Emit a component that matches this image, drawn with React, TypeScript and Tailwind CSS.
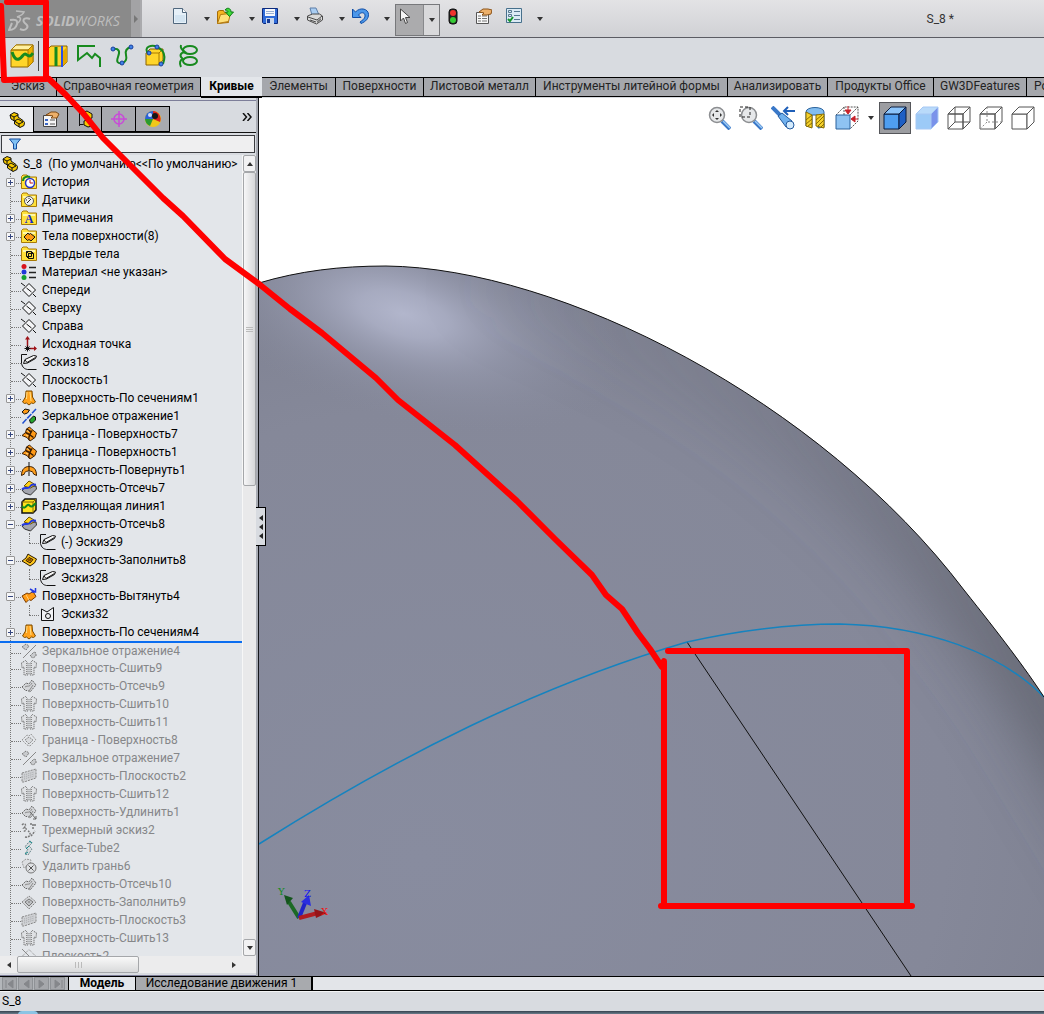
import type { ReactNode } from "react";

type IconProps = { name: string };

const Box = ({ size = 16, children }: { size?: number; children: ReactNode }) => (
  <svg width={size} height={size} viewBox={`0 0 ${size} ${size}`} className="shrink-0" aria-hidden="true">
    {children}
  </svg>
);

const Folder = ({ children }: { children: ReactNode }) => (
  <Box>
    <path d="M.5 14.500V2.500L2 1h4l1.500 2h8v11.500z" fill="#ffe13a" stroke="#a87a08" />
    <path d="M2 4h12v2H2z" fill="#fff6a8" />
    {children}
  </Box>
);

function TreeIcon({ name }: IconProps) {
  switch (name) {
    case "part":
      return (
        <Box>
          <path d="M1 3l4-2.500 4 1.500v3l5 3.500 1.500 2-.5 3-4 2-5.500-3.500v-3l-3.500-2z" fill="#f5c800" stroke="#111" />
          <path d="M1 3l4 2 4-2M5 5v4M5.500 9l3.500-2 5 3M10 12v3M10 12l4-2M5.500 9l4.500 3" stroke="#111" fill="none" />
        </Box>
      );
    case "history":
      return (
        <Folder>
          <circle cx="9" cy="9" r="4.500" fill="#fff" stroke="#2635c9" strokeWidth="1.500" />
          <path d="M9 6v3h3" stroke="#c01818" fill="none" />
          <path d="M2 7c0-4 4-5 7-4" stroke="#168a20" strokeWidth="2" fill="none" />
        </Folder>
      );
    case "sensor":
      return (
        <Folder>
          <circle cx="8" cy="9" r="4.500" fill="#f2f2f2" stroke="#555" />
          <path d="M6 11l4-4M5 8h1M8 6v1" stroke="#222" fill="none" />
        </Folder>
      );
    case "notes":
      return (
        <Folder>
          <text x="8" y="13" textAnchor="middle" fontSize="12" fontWeight="bold" fontFamily="Liberation Serif, serif" fill="#1326c8">A</text>
        </Folder>
      );
    case "surfaces":
      return (
        <Folder>
          <path d="M3 9l4-4 1 1.500L9.500 5.500 14 9l-4 4-2-1.500L6.500 12.500z" fill="#ff9a14" stroke="#111" />
        </Folder>
      );
    case "solids":
      return (
        <Folder>
          <path d="M5.500 5.500h5v5h-5zM7.500 7.500h5v5h-5zM5.500 5.500l2 2M10.500 5.500l2 2M5.500 10.500l2 2" fill="none" stroke="#111" />
        </Folder>
      );
    case "material":
      return (
        <Box>
          <circle cx="3" cy="2.500" r="2.500" fill="#d8141c" />
          <circle cx="3" cy="8" r="2.500" fill="#1f36d8" />
          <circle cx="3" cy="13.500" r="2.500" fill="#14a030" />
          <path d="M8 3.500h7M8 8.500h7M8 13.500h7" stroke="#222" strokeWidth="1.500" />
        </Box>
      );
    case "plane":
      return (
        <Box>
          <path d="M1.500 8L8 1.500 14.500 8 8 14.500z" fill="#f3f4f6" stroke="#111" />
          <path d="M0 1l4 3M12 12l3 3M5.500 6l5 4" stroke="#111" fill="none" />
        </Box>
      );
    case "planeOff":
      return (
        <Box>
          <path d="M1.500 8L8 1.500 14.500 8 8 14.500z" fill="none" stroke="#888" strokeDasharray="1 1" />
          <path d="M1 1l14 14" stroke="#888" />
        </Box>
      );
    case "origin":
      return (
        <Box>
          <path d="M6.500 12V2M8 12.500h7" stroke="#a01218" strokeWidth="1.500" fill="none" />
          <path d="M6.500 0l-2.500 3.500h5zM16 12.500l-3-2.500v5z" fill="#a01218" />
          <path d="M3.500 12.500h6M6.500 9.500v6M4.500 10.500l4 4M8.500 10.500l-4 4" stroke="#111" />
        </Box>
      );
    case "sketch":
      return (
        <Box>
          <path d="M6 .5H.5v9c1 4 3 5.500 6 6h9" fill="none" stroke="#111" />
          <path d="M2.500 9.500l1.500-4 8.500-4 3 .5-1 2.500-8 4.500z" fill="#f6f6f6" stroke="#111" />
          <path d="M4 6l2 2.500 8.500-5" fill="none" stroke="#111" />
        </Box>
      );
    case "sketchClosed":
      return (
        <Box>
          <path d="M1.500 3v11.500h12V1.500L7 6z" fill="#f2f3f5" stroke="#111" />
          <circle cx="8" cy="10" r="2.500" fill="none" stroke="#111" />
        </Box>
      );
    case "loft":
      return (
        <Box>
          <path d="M5 1h6l.5 6L14.500 12l-2 1.500-2-.5-2.500 2-2.500-2-2 .5-2-1.500 3-5z" fill="#ffa21c" stroke="#7a4a00" />
          <path d="M6 2l-.5 7M9 2l1 9" stroke="#ffe08a" />
        </Box>
      );
    case "mirror":
      return (
        <Box>
          <path d="M1 4l3-3 4.500 1-2 3-3 1z" fill="#ff9a14" stroke="#111" />
          <path d="M8.500 12l4-4 2 1v3l-3 3h-2z" fill="#27a52c" stroke="#111" />
          <path d="M1.500 15.500L15 1" stroke="#1f4fd0" strokeWidth="1.500" strokeDasharray="6 1" />
        </Box>
      );
    case "boundary":
      return (
        <Box>
          <path d="M1 9.500l3.500-3 1-3.500 3-2 2.500 2.500 4.500 3.500-1.500 4.500-5 3.500-3-3.500z" fill="#ff9a18" stroke="#3a1c00" />
          <path d="M4.500 6.500l3 1.500 5 3.500M8 14c-1-3 1-6 3-9.500M5.500 3l5 3" stroke="#3a1c00" strokeWidth="1.500" fill="none" />
          <path d="M6 4.500l2 1M5 9l2 1" stroke="#ffd98a" />
        </Box>
      );
    case "revolve":
      return (
        <Box>
          <path d="M.5 13.500C.5 7 4 4.500 8 4.500s7.500 2 7.500 9l-3-1.500c0-2-2-3-4.500-3s-5 1-4.500 3z" fill="#ff9f1c" stroke="#3a1c00" />
          <path d="M8 0v15" stroke="#111" strokeDasharray="4 1" />
        </Box>
      );
    case "trim":
      return (
        <Box>
          <path d="M1 10l5-3 9-1 .5 3-6 6-6-2z" fill="#a3a5ae" stroke="#333" />
          <path d="M3 6l5-5 3.500 2 3 2-5 3z" fill="#ffd21a" stroke="#6b5200" />
          <path d="M1 9.500c3-4 5 1 8-3s3-1 6-2" stroke="#2338e0" strokeWidth="2" fill="none" />
        </Box>
      );
    case "split":
      return (
        <Box>
          <path d="M1 4l3-3h11v11l-3 3H1z" fill="#ffe11c" stroke="#111" strokeWidth="1.500" />
          <path d="M1 4h11l3-3M12 4v11" stroke="#8a6a00" fill="none" />
          <path d="M1 8c3 5 5-3 7-1s2 3 7-2" stroke="#128a1c" strokeWidth="2" fill="none" />
        </Box>
      );
    case "fill":
      return (
        <Box>
          <path d="M1 9l4-3 2-4 3 2 5.500 3-2 4-4.500 3-3-2z" fill="#ffc61a" stroke="#2a1a00" />
          <path d="M5 8.500l3-3 4 2-3 3.500z" fill="#e28a00" stroke="#2a1a00" />
          <path d="M7 8h3" stroke="#2a1a00" />
        </Box>
      );
    case "extrude":
      return (
        <Box>
          <path d="M1 8l5-3 2 1 4-2.500 3 5-5 4-2-1-3 3z" fill="#ff9a14" stroke="#7a3c00" />
          <path d="M5 7l3 5" stroke="#ffd27a" />
          <path d="M9 1l5 3M14.500 0v4h-4" stroke="#2338e0" strokeWidth="1.500" fill="none" />
        </Box>
      );
    case "knit":
      return (
        <Box>
          <path d="M.5 3l4-2.500L7 3v12H3V7L1 8zM15.500 3l-4-2.500L9 3v12h4V7l2 1z" fill="#dfe1e4" stroke="#555" strokeDasharray="1 1" />
          <path d="M5.500 3v11M10.500 3v11" stroke="#888" strokeDasharray="1 1" />
        </Box>
      );
    case "trimOff":
    case "extendOff":
      return (
        <Box>
          <path d="M1 9l4-4 3 1 3-4 4 5-6 7-3-2-1 1z" fill="#d3d5d8" stroke="#666" strokeDasharray="2 1" />
          <path d="M4 9c3-2 4 1 7-4M8 13l4-6" stroke="#888" fill="none" />
          {name === "extendOff" && <path d="M9 8l6 7M12 15h3v-3" stroke="#666" fill="none" />}
        </Box>
      );
    case "boundaryOff":
      return (
        <Box>
          <path d="M1 8l5-5 2 1 2-2 5 6-6 6-3-1z" fill="none" stroke="#999" strokeDasharray="2 1" />
          <path d="M4 8l4-3 4 3-4 4z" fill="#d8dadd" stroke="#888" strokeDasharray="2 1" />
        </Box>
      );
    case "mirrorOff":
      return (
        <Box>
          <path d="M1 4l4-3 3 2-3 4z" fill="#c9cbce" stroke="#777" strokeDasharray="2 1" />
          <path d="M9 13l4-4 2 1v3l-3 2z" fill="#c9cbce" stroke="#777" strokeDasharray="2 1" />
          <path d="M2 15L15 2" stroke="#888" />
        </Box>
      );
    case "planar":
      return (
        <Box>
          <path d="M1 5l14-4v9L3 14H1z" fill="#cfd1d4" stroke="#888" strokeDasharray="2 1" />
          <path d="M3 7l10-3M3 9l10-3M3 11l10-3" stroke="#a7a9ac" strokeDasharray="1 1" />
        </Box>
      );
    case "sketch3d":
      return (
        <Box>
          <path d="M1 3c3-3 5 0 2 3 4 0 2 4-1 3M9 2h3v5M4 15c5 1 7-4 3-6M10 14l4-5M14 2v3" fill="none" stroke="#777" strokeWidth="1.500" strokeDasharray="2 1" />
        </Box>
      );
    case "tube":
      return (
        <Box>
          <path d="M6 4l4-3 1 2-3 3 3 3-4 6-3-1 3-5-3-2z" fill="#d9dbde" stroke="#6e8b8e" strokeDasharray="2 1" />
          <path d="M5 9l3-3M4 14l3-2M8 1l3 2" stroke="#138b8e" />
        </Box>
      );
    case "deleteFace":
      return (
        <Box>
          <path d="M1 4l4-3 5 1-1 4-6 4z" fill="#dcdee1" stroke="#999" strokeDasharray="2 1" />
          <circle cx="10" cy="10" r="5" fill="#dfe1e4" stroke="#777" />
          <path d="M7.500 7.500l5 5M12.500 7.500l-5 5" stroke="#555" />
        </Box>
      );
    default:
      return (
        <Box>
          <path d="M1 8l7-6 7 6-7 7z" fill="#d4d6d9" stroke="#888" strokeDasharray="2 1" />
          <path d="M4 8l4-3 4 3-4 4zM7 8h2" fill="#c0c2c5" stroke="#777" />
        </Box>
      );
  }
}

type Node = { label: string; icon: string; state?: "plus" | "minus"; child?: boolean; off?: boolean; rollback?: boolean };

const nodes: Node[] = [
  { label: "История", icon: "history", state: "plus" },
  { label: "Датчики", icon: "sensor" },
  { label: "Примечания", icon: "notes", state: "plus" },
  { label: "Тела поверхности(8)", icon: "surfaces", state: "plus" },
  { label: "Твердые тела", icon: "solids" },
  { label: "Материал <не указан>", icon: "material" },
  { label: "Спереди", icon: "plane" },
  { label: "Сверху", icon: "plane" },
  { label: "Справа", icon: "plane" },
  { label: "Исходная точка", icon: "origin" },
  { label: "Эскиз18", icon: "sketch" },
  { label: "Плоскость1", icon: "plane" },
  { label: "Поверхность-По сечениям1", icon: "loft", state: "plus" },
  { label: "Зеркальное отражение1", icon: "mirror" },
  { label: "Граница - Поверхность7", icon: "boundary", state: "plus" },
  { label: "Граница - Поверхность1", icon: "boundary", state: "plus" },
  { label: "Поверхность-Повернуть1", icon: "revolve", state: "plus" },
  { label: "Поверхность-Отсечь7", icon: "trim", state: "plus" },
  { label: "Разделяющая линия1", icon: "split", state: "plus" },
  { label: "Поверхность-Отсечь8", icon: "trim", state: "minus" },
  { label: "(-) Эскиз29", icon: "sketch", child: true },
  { label: "Поверхность-Заполнить8", icon: "fill", state: "minus" },
  { label: "Эскиз28", icon: "sketch", child: true },
  { label: "Поверхность-Вытянуть4", icon: "extrude", state: "minus" },
  { label: "Эскиз32", icon: "sketchClosed", child: true },
  { label: "Поверхность-По сечениям4", icon: "loft", state: "plus" },
  { label: "Зеркальное отражение4", icon: "mirrorOff", off: true, rollback: true },
  { label: "Поверхность-Сшить9", icon: "knit", off: true },
  { label: "Поверхность-Отсечь9", icon: "trimOff", off: true },
  { label: "Поверхность-Сшить10", icon: "knit", off: true },
  { label: "Поверхность-Сшить11", icon: "knit", off: true },
  { label: "Граница - Поверхность8", icon: "boundaryOff", off: true },
  { label: "Зеркальное отражение7", icon: "mirrorOff", off: true },
  { label: "Поверхность-Плоскость2", icon: "planar", off: true },
  { label: "Поверхность-Сшить12", icon: "knit", off: true },
  { label: "Поверхность-Удлинить1", icon: "extendOff", off: true },
  { label: "Трехмерный эскиз2", icon: "sketch3d", off: true },
  { label: "Surface-Tube2", icon: "tube", off: true },
  { label: "Удалить грань6", icon: "deleteFace", off: true },
  { label: "Поверхность-Отсечь10", icon: "trimOff", off: true },
  { label: "Поверхность-Заполнить9", icon: "fillOff", off: true },
  { label: "Поверхность-Плоскость3", icon: "planar", off: true },
  { label: "Поверхность-Сшить13", icon: "knit", off: true },
  { label: "Плоскость2", icon: "planeOff", off: true },
];

function TreeRow({ node }: { node: Node }) {
  return (
    <li className={`relative flex h-[18px] shrink-0 items-center ${node.child ? "pl-[40px]" : "pl-[21px]"} ${node.rollback ? "border-t-2 border-[#0a6df0]" : ""}`}>
      <span className={`absolute top-[10px] border-t border-dotted border-[#777] ${node.child ? "left-[29px] w-[10px]" : "left-[11px] w-[10px]"}`} />
      {node.child && <span className="absolute left-[29px] top-0 h-[10px] border-l border-dotted border-[#777]" />}
      {node.state && (
        <button
          aria-label={node.state === "plus" ? `Развернуть ${node.label}` : `Свернуть ${node.label}`}
          className="absolute left-[6px] top-[5px] flex size-[9px] items-center justify-center rounded-[1px] border border-[#979797] bg-[#f6f7f9]"
        >
          <svg width="5" height="5" viewBox="0 0 5 5" aria-hidden="true">
            <path d={node.state === "plus" ? "M0 2.500h5M2.500 0v5" : "M0 2.500h5"} stroke="#36477f" />
          </svg>
        </button>
      )}
      <TreeIcon name={node.icon} />
      <span className={`ml-[5px] whitespace-nowrap ${node.off ? "text-[#868789]" : "text-black"}`}>{node.label}</span>
    </li>
  );
}

const Caret = ({ className = "" }: { className?: string }) => (
  <svg width="6" height="4" viewBox="0 0 6 4" className={`shrink-0 ${className}`} aria-hidden="true">
    <path d="M0 0h6L3 4z" fill="#333" />
  </svg>
);

const fileTools = [
  {
    label: "Создать",
    art: (
      <Box size={18}>
        <path d="M2.500 1.500h9l4 4v11h-13z" fill="#e6f0f8" stroke="#50677d" />
        <path d="M11.500 1.500v4h4" fill="#fff" stroke="#50677d" />
        <path d="M4 8h10v7H4z" fill="#c7dcec" opacity=".6" />
      </Box>
    ),
  },
  {
    label: "Открыть",
    art: (
      <Box size={18}>
        <path d="M1.500 16.500v-12l2-1h4l1 2h4v10z" fill="#f5b521" stroke="#a46a08" />
        <path d="M1.500 16.500l3-9 10-1-2 8z" fill="#ffe07a" stroke="#b47a10" />
        <path d="M9 3c2-3 6-2 6 2h2.500l-4 4.500-4-4.500h2.500c0-1-1-2-3-2z" fill="#3ddb3a" stroke="#0d7a14" />
      </Box>
    ),
  },
  {
    label: "Сохранить",
    art: (
      <Box size={18}>
        <path d="M1.500 1.500h15v15h-14l-1-1z" fill="#2f6bd8" stroke="#0d2a7c" />
        <path d="M4 2h10v7H4z" fill="#f6f8fc" />
        <path d="M5 4.500h8M5 6.500h8" stroke="#9ab0d2" />
        <path d="M5 11h8v6H5z" fill="#c9d6ea" />
        <path d="M6 12h3v4H6z" fill="#163a94" />
      </Box>
    ),
  },
  {
    label: "Печать",
    art: (
      <Box size={18}>
        <path d="M4 1h6l3 7H6z" fill="#a9cdf2" stroke="#5e7fa8" />
        <path d="M1.500 9l5-2h7l3 2v4l-6 4-9-4z" fill="#d9d9d9" stroke="#4b4b4b" />
        <path d="M2 10l9 3 5-4M4 13l6 2" stroke="#4b4b4b" fill="none" />
        <path d="M11 14l4-3v2l-4 3z" fill="#777" />
      </Box>
    ),
  },
  {
    label: "Отменить",
    art: (
      <Box size={18}>
        <path d="M1.500 2v8.500h8.500L7.500 8c2-3 6-3 6.500 0s-2 5-5 7l1 1.500c5-2 7.500-5 7.500-9 0-5.500-8-8-13-2.500z" fill="#4b97ea" stroke="#0f4da6" />
      </Box>
    ),
  },
];

const Cube = ({ front, top, side, line, dashed }: { front: string; top: string; side: string; line: string; dashed?: boolean }) => (
  <>
    <path d="M1 8h15v15H1z" fill={front} stroke={line} />
    <path d="M1 8l7-7h15l-7 7z" fill={top} stroke={line} />
    <path d="M16 8l7-7v15l-7 7z" fill={side} stroke={line} />
    {dashed && <path d="M8 1v15h15M8 16l-7 7" fill="none" stroke="#888" strokeDasharray="2 2" />}
  </>
);

const tabs = [
  ["Эскиз", "w-[57px]"],
  ["Справочная геометрия", "w-[144px]"],
  ["Кривые", "w-[61px]"],
  ["Элементы", "w-[74px]"],
  ["Поверхности", "w-[88px]"],
  ["Листовой металл", "w-[112px]"],
  ["Инструменты литейной формы", "w-[192px]"],
  ["Анализировать", "w-[100px]"],
  ["Продукты Office", "w-[106px]"],
  ["GW3DFeatures", "w-[93px]"],
  ["PointCloud", "w-[84px]"],
];

function TitleBar() {
  return (
    <header className="flex h-[38px] shrink-0 items-stretch border-b border-[#5b5c63] bg-linear-to-b from-[#e3e3e5] to-[#d0d1d5]">
      <div className="flex w-[131px] shrink-0 items-center gap-1 bg-[#8a8a8a] pl-2 pt-1 text-[#bdbdbd]">
        <svg width="24" height="24" viewBox="0 0 24 24" fill="none" stroke="#bdbdbd" aria-label="DS">
          <path d="M8 2l8 1c-1 3-4 4-7 5 5 0 4 3 1 6" strokeWidth="1.500" />
          <path d="M2 11c5-1 8 0 7 4s-4 6-8 6l3-7" strokeWidth="2" />
          <path d="M22 10c-4-2-8 0-6 3s5 3 3 6-5 2-7 1" strokeWidth="2" />
        </svg>
        <span className="font-['Open_Sans',sans-serif] text-[14px] italic leading-none"><b>SOLID</b>WORKS</span>
      </div>
      <button aria-label="Развернуть меню" className="flex w-[11px] shrink-0 items-center justify-center border-r-2 border-[#aaaaad] bg-[#a3a3a5]">
        <svg width="4" height="8" viewBox="0 0 4 8" aria-hidden="true"><path d="M0 0l4 4-4 4z" fill="#777" /></svg>
      </button>
      <nav aria-label="Стандартная" className="flex shrink-0 pb-[5px] pl-[29px]">
        {fileTools.map((t) => (
          <div key={t.label} className="flex w-[45px] items-center">
            <button aria-label={t.label} className="mr-[15px]">{t.art}</button>
            <button aria-label={`${t.label}: варианты`} className="pt-[6px]"><Caret /></button>
          </div>
        ))}
      </nav>
      <div className="-ml-px mt-1 flex h-[32px] shrink-0 border border-[#77787b]">
        <button aria-label="Выбрать" className="flex w-[28px] items-start justify-center border-r border-[#88898c] bg-[#ababad] pr-[9px] pt-[3px]">
          <svg width="12" height="17" viewBox="0 0 12 17" aria-hidden="true"><path d="M1.500 1v12l3-3 2 5.500 2-1-2-5H11z" fill="#f5f5f5" stroke="#444" /></svg>
        </button>
        <button aria-label="Режимы выбора" className="flex w-[15px] items-center justify-center bg-[#d9d9db]"><Caret /></button>
      </div>
      <div className="flex shrink-0 items-center pb-[5px]">
        <button aria-label="Перестроить" className="flex w-[26px] justify-center">
          <svg width="10" height="17" viewBox="0 0 10 17" aria-hidden="true">
            <rect x="1" y="1" width="8" height="15" rx="3" fill="#222" stroke="#111" />
            <circle cx="5" cy="5" r="3" fill="#f0332d" />
            <circle cx="5" cy="12" r="3" fill="#36cc36" />
          </svg>
        </button>
        <button aria-label="Свойства файла" className="ml-[3px] flex w-[28px] justify-center">
          <Box size={18}>
            <path d="M2.500 5.500h12v11h-12z" fill="#f8f8f8" stroke="#555" />
            <path d="M4 9h3M8 9h5M4 11.500h3M8 11.500h5M4 14h3M8 14h5" stroke="#777" />
            <path d="M5 5l4-3h5l4 1-1 4-4 1-5 0 2-2z" fill="#edb06a" stroke="#8d5418" />
          </Box>
        </button>
        <button aria-label="Параметры" className="flex w-[34px] justify-center">
          <Box size={18}>
            <path d="M1.500 1.500h15v14h-15z" fill="#dbeaf4" stroke="#47708c" />
            <path d="M3.500 3.500h3v2h-3zM3.500 7.500h3v2h-3zM9 4.500h6M9 8.500h6M9 12.500h6" fill="none" stroke="#56788f" />
            <path d="M3 12l2 2 3-4" fill="none" stroke="#15952a" strokeWidth="2" />
          </Box>
        </button>
        <button aria-label="Другие параметры" className="flex w-[18px] justify-center pt-[5px]"><Caret /></button>
      </div>
      <h1 className="ml-auto self-center pr-[90px] text-[12px] text-[#333]">S_8 *</h1>
    </header>
  );
}

function CurveBar() {
  const Tool = ({ label, children }: { label: string; children: ReactNode }) => (
    <button aria-label={label} className="flex w-[32px] justify-center">
      <Box size={24}>{children}</Box>
    </button>
  );
  const dot = "#3f82e8";
  return (
    <nav aria-label="Кривые" className="flex h-[39px] shrink-0 items-center bg-[#d8dbe0] pb-1 pl-[6px]">
      <Tool label="Линия разъема">
        <path d="M1 6l5-5h17v17l-5 5H1z" fill="#ffd52a" stroke="#8a6200" />
        <path d="M18 6l5-5v17l-5 5z" fill="#efb000" stroke="#a87b00" />
        <path d="M1 6h17M6 1h17L18 6H1z" fill="#fff0a0" stroke="#a87b00" />
        <path d="M2 8c2 6 4 8 7 7s4-5 6-5 4 5 8-1" fill="none" stroke="#178a1e" strokeWidth="3" />
      </Tool>
      <span className="mr-[2px] h-[30px] border-l border-[#444]" />
      <Tool label="Проекция на плоскость">
        <path d="M2 6l4-4h16v16l-4 4H2z" fill="#ffd52a" stroke="#8a6200" />
        <path d="M11 3v19" stroke="#178a1e" strokeWidth="3" />
        <path d="M18 7l4-4v15l-4 4z" fill="#e5a800" />
        <path d="M17 2v21" stroke="#2a50e8" strokeWidth="2" />
      </Tool>
      <div className="flex gap-px">
        <Tool label="Составная кривая">
          <path d="M18 2H1v14l9-7 5 5 3-4 5 4v9" fill="none" stroke="#178a1e" strokeWidth="2" />
        </Tool>
        <Tool label="Кривая через точки">
          <path d="M2 5c8-1 8 3 6 8s0 7 4 6 5-4 4-8 1-7 5-8" fill="none" stroke="#178a1e" strokeWidth="2" />
          <circle cx="3" cy="5" r="2" fill={dot} stroke="#1a3f9c" />
          <circle cx="12" cy="19" r="2" fill={dot} stroke="#1a3f9c" />
          <circle cx="21" cy="3" r="2" fill={dot} stroke="#1a3f9c" />
        </Tool>
        <Tool label="Кривая по XYZ">
          <path d="M3 9l4-4h13v11l-4 5H3z" fill="#ffd52a" stroke="#8a6200" />
          <path d="M3 9h13l4-4M16 9v12" fill="none" stroke="#a87b00" />
          <path d="M5 9C0 3 9 0 14 3c7 3 9 9 6 17" fill="none" stroke="#178a1e" strokeWidth="2" />
          <circle cx="6" cy="9" r="2" fill={dot} stroke="#1a3f9c" />
          <circle cx="14" cy="3" r="2" fill={dot} stroke="#1a3f9c" />
          <circle cx="18" cy="20" r="2" fill={dot} stroke="#1a3f9c" />
        </Tool>
        <Tool label="Геликоид">
          <ellipse cx="14" cy="6" rx="7" ry="4" fill="none" stroke="#178a1e" strokeWidth="2" />
          <ellipse cx="14" cy="17" rx="7" ry="4" fill="none" stroke="#178a1e" strokeWidth="2" />
          <path d="M5 1c-1 3 1 5 4 7-5 1-6 4-2 7-3 1-4 4-2 8" fill="none" stroke="#178a1e" strokeWidth="2" />
        </Tool>
      </div>
    </nav>
  );
}

function FeatureManager() {
  const side = "flex w-[34px] items-center justify-center border-b border-r border-t border-black";
  return (
    <aside className="relative flex w-[259px] shrink-0 flex-col border-r border-r-[#15161a] bg-[#d8dbe0]">
      <div className="flex min-h-0 flex-1 flex-col border-r-2 border-[#a9acb4]">
        <div className="h-[3px] shrink-0 border-b border-[#7d7e99]" />
        <div className="mt-[5px] flex h-[27px] shrink-0 border-b border-[#111]">
          <button aria-label="Дерево конструирования" className="flex w-[34px] items-center justify-center border-r border-t border-black bg-[#eceef1]"><TreeIcon name="part" /></button>
          <button aria-label="Диспетчер свойств" className={`${side} bg-[#a8aaaf]`}>
            <Box size={18}>
              <path d="M1.500 5.500h13v11h-13z" fill="#f6f6f6" stroke="#444" />
              <path d="M3 9h3v2H3zM3 13h3v2H3z" fill="#3b68c8" />
              <path d="M8 10h5M8 14h5" stroke="#555" />
              <path d="M4 5l5-3h5l3 2-2 4H9l2-2z" fill="#edb06a" stroke="#7d4a14" />
            </Box>
          </button>
          <button aria-label="Диспетчер конфигураций" className={`${side} bg-[#a8aaaf]`}>
            <Box size={18}>
              <path d="M3.500 2v14M3.500 3.500h4M3.500 14.500h4" stroke="#111" fill="none" />
              <path d="M8 2l3-1 5 3v4l-4 1-4-3zM8 11l3-1 5 3v3l-4 1-4-2z" fill="#f5c800" stroke="#111" />
            </Box>
          </button>
          <button aria-label="Диспетчер размеров" className={`${side} bg-[#a8aaaf]`}>
            <Box size={18}>
              <circle cx="9" cy="9" r="5" fill="none" stroke="#c84bd8" strokeWidth="1.500" />
              <path d="M9 1v16M1 9h16" stroke="#c84bd8" strokeWidth="1.500" />
            </Box>
          </button>
          <button aria-label="Диспетчер отображения" className={`${side} bg-[#a8aaaf]`}>
            <Box size={18}>
              <circle cx="9" cy="9" r="8" fill="#f0c818" />
              <path d="M9 9L1 9a8 8 0 0 1 8-8z" fill="#2a62d8" />
              <path d="M9 9V1a8 8 0 0 1 7 11z" fill="#d8221c" />
              <path d="M9 9l-8 0a8 8 0 0 0 5 7z" fill="#2a9a30" />
              <circle cx="11" cy="6" r="3" fill="#161616" />
              <circle cx="6" cy="5" r="2" fill="#fff" opacity=".8" />
            </Box>
          </button>
          <button aria-label="Показать область" className="ml-auto mr-1 flex items-start pt-[7px]">
            <svg width="10" height="8" viewBox="0 0 10 8" aria-hidden="true"><path d="M1 0l3.500 4L1 8M5.500 0L9 4 5.500 8" fill="none" stroke="#111" strokeWidth="1.500" /></svg>
          </button>
        </div>
        <label className="mx-px mt-[2px] flex h-[18px] shrink-0 items-center border border-[#3b3c40] bg-[#efeff0] pl-[7px]">
          <svg width="12" height="12" viewBox="0 0 12 12" aria-hidden="true"><path d="M.5 1h11L7.500 6v5h-3V6z" fill="#7fc0f4" stroke="#134a9c" /></svg>
          <input aria-label="Фильтр дерева" className="h-full min-w-0 flex-1 bg-transparent px-1 outline-none" />
        </label>
        <div className="mt-[2px] flex min-h-0 flex-1 bg-[#e3e6ea]">
          <div className="relative min-h-0 min-w-0 flex-1 overflow-hidden">
            <ul className="absolute inset-0 overflow-hidden">
              <li className="flex h-[18px] items-center pl-[2px]">
                <TreeIcon name="part" />
                <span className="ml-[5px] whitespace-pre">S_8  (По умолчанию&lt;&lt;По умолчанию&gt;</span>
              </li>
              <li className="relative">
                <span className="absolute bottom-0 left-[10px] top-0 border-l border-dotted border-[#777]" />
                <ul>
                  {nodes.map((n) => (
                    <TreeRow key={n.label} node={n} />
                  ))}
                </ul>
              </li>
            </ul>
          </div>
          <div className="flex w-[14px] shrink-0 flex-col border-l border-[#f7f7f7] bg-[#e9e9ea]">
            <button aria-label="Прокрутить вверх" className="flex h-[17px] items-center justify-center rounded-[2px] border border-[#a5a7aa] bg-[#f2f2f3]"><Caret className="rotate-180" /></button>
            <div className="flex min-h-0 flex-1 flex-col">
              <div className="flex h-[41%] flex-col items-center justify-center gap-px rounded-[2px] border border-[#a5a7aa] bg-linear-to-r from-[#f7f7f8] to-[#d6d7d9]">
                <span className="w-[7px] border-t border-[#bbb]" />
                <span className="w-[7px] border-t border-[#bbb]" />
                <span className="w-[7px] border-t border-[#bbb]" />
              </div>
            </div>
            <button aria-label="Прокрутить вниз" className="flex h-[17px] items-center justify-center rounded-[2px] border border-[#a5a7aa] bg-[#f2f2f3]"><Caret /></button>
          </div>
        </div>
        <div className="flex h-[17px] shrink-0 items-stretch bg-[#ececed] pr-[14px]">
          <button aria-label="Прокрутить влево" className="flex w-[17px] items-center justify-center"><Caret className="rotate-90" /></button>
          <div className="flex w-[122px] items-center justify-center gap-[2px] rounded-[2px] border border-[#a5a7aa] bg-linear-to-b from-[#f9f9f9] to-[#d9dadb]">
            <span className="h-[6px] border-l border-[#bbb]" />
            <span className="h-[6px] border-l border-[#bbb]" />
            <span className="h-[6px] border-l border-[#bbb]" />
          </div>
          <button aria-label="Прокрутить вправо" className="ml-auto flex w-[17px] items-center justify-center"><Caret className="-rotate-90" /></button>
        </div>
        <div className="h-[3px] shrink-0 border-b border-[#7d7e99]" />
      </div>
      <button aria-label="Свернуть панель" className="absolute -right-[8px] top-[409px] z-10 flex h-[39px] w-[10px] flex-col items-center justify-evenly border border-l-0 border-black bg-[#d8dbe0]">
        <svg width="4" height="30" viewBox="0 0 4 30" aria-hidden="true"><path d="M4 3v6L0 6zM4 12v6l-4-3zM4 21v6l-4-3z" fill="#222" /></svg>
      </button>
    </aside>
  );
}

function Scene() {
  const outline = "M0 185C40 173 81 168 127 168C301 170 561 302 705 492C741 537 766 570 785 599";
  return (
    <svg className="absolute inset-0 size-full bg-white" aria-label="Модель S_8">
      <defs>
        <radialGradient id="shine" gradientUnits="userSpaceOnUse" cx="0" cy="0" r="1" gradientTransform="translate(145 216) rotate(16) scale(230 105)">
          <stop offset="0" stopColor="#b2b6cc" />
          <stop offset=".2" stopColor="#abafc5" stopOpacity=".9" />
          <stop offset=".5" stopColor="#9a9eb3" stopOpacity=".55" />
          <stop offset="1" stopColor="#868a9d" stopOpacity="0" />
        </radialGradient>
        <radialGradient id="body" gradientUnits="userSpaceOnUse" cx="0" cy="0" r="1" gradientTransform="translate(160 760) rotate(-12) scale(760 640)">
          <stop offset="0" stopColor="#888c9f" />
          <stop offset=".7" stopColor="#858899" />
          <stop offset="1" stopColor="#7d8090" />
        </radialGradient>
        <linearGradient id="rim" gradientUnits="userSpaceOnUse" x1="200" y1="168" x2="785" y2="600">
          <stop offset="0" stopColor="#62646f" stopOpacity="0" />
          <stop offset=".5" stopColor="#62646f" stopOpacity=".35" />
          <stop offset="1" stopColor="#5b5d67" stopOpacity=".85" />
        </linearGradient>
        <filter id="soften" x="-20%" y="-20%" width="140%" height="140%"><feGaussianBlur stdDeviation="32" /></filter>
        <clipPath id="hull"><path d={`${outline}V2000H0z`} /></clipPath>
      </defs>
      <g clipPath="url(#hull)">
        <rect width="100%" height="100%" fill="url(#body)" />
        <rect width="100%" height="100%" fill="url(#shine)" />
        <path d={`${outline}L900 790`} fill="none" stroke="url(#rim)" strokeWidth="60" filter="url(#soften)" />
        <path d="M428 544L652 878" stroke="#111" strokeWidth="1" />
        <path d="M0 746C141 657 281 587 428 544C482 532 531 526 581 526C666 528 741 554 785 599" fill="none" stroke="#1583bf" strokeWidth="1.500" />
      </g>
      <path d={outline} fill="none" stroke="#111" />
      <g>
        <path d="M40 820L30 804" stroke="#1c6a24" strokeWidth="4" />
        <path d="M25 797l9 3-6 7z" fill="#14551c" />
        <path d="M40 820l6-15" stroke="#2024c8" strokeWidth="4" />
        <path d="M50 797l2 11-10-4z" fill="#2a2ee0" />
        <path d="M40 820l19-5" stroke="#b01c20" strokeWidth="4" />
        <path d="M68 815l-11 5-2-9z" fill="#951418" />
        <g fontFamily="DejaVu Serif, serif" fontSize="10">
          <text x="19" y="797" fill="#168a1c">Y</text>
          <text x="45" y="799" fill="#1414f0">Z</text>
          <text x="62" y="817" fill="#f01414">X</text>
        </g>
      </g>
    </svg>
  );
}

const Glass = () => (
  <>
    <path d="M14 15l8 8" stroke="#3a78c8" strokeWidth="4" />
    <path d="M15 15l7 7" stroke="#9ccaf5" strokeWidth="1.500" />
    <circle cx="9" cy="9" r="7.500" fill="#e6e8ea" stroke="#8c8e91" strokeWidth="1.500" />
  </>
);

function Viewport() {
  const cell = "flex w-[32px] shrink-0 items-center justify-center";
  return (
    <main className="relative min-w-0 flex-1 overflow-hidden bg-white">
      <Scene />
      <nav aria-label="Вид" className="relative flex h-[40px] justify-end">
        <div className="-mr-[31px] flex items-stretch py-1">
          <button aria-label="Во весь экран" className={cell}>
            <Box size={24}><g transform="translate(1 0)"><Glass /><path d="M9 4l2 2H7zM9 14l2-2H7zM4 9l2-2v4zM14 9l-2-2v4z" fill="#333" /></g></Box>
          </button>
          <button aria-label="Увеличить область" className={cell}>
            <Box size={24}><g transform="translate(1 0)"><Glass /></g><path d="M1 1h10v10H1z" fill="none" stroke="#222" strokeDasharray="3 2" /></Box>
          </button>
          <button aria-label="Предыдущий вид" className={cell}>
            <Box size={24}>
              <path d="M1 1l8 8" stroke="#3a78c8" strokeWidth="4" />
              <path d="M7 10l4-3 10 8-6 6z" fill="#6fb0ee" stroke="#235a9e" />
              <circle cx="19" cy="19" r="4" fill="#d4ebfd" stroke="#235a9e" />
              <path d="M24 5H14M17 1l-4 4 4 4" fill="none" stroke="#1f5fb8" strokeWidth="2" />
            </Box>
          </button>
          <button aria-label="Разрез" className={cell}>
            <Box size={24}>
              <path d="M3 6c0-6 18-6 18 0v15l-6 1V9H9v12l-6-1z" fill="#82bdf0" stroke="#2c639c" />
              <path d="M3 6l6 3v13l-6-2zM13 9l8-1v14l-8-2z" fill="#f6d22c" stroke="#8a6c00" />
              <path d="M3 14l6-5M3 18l6-5M5 20l4-3M13 14l6-5M13 18l8-8M15 20l6-6M18 21l3-3" stroke="#8a6c00" />
            </Box>
          </button>
          <button aria-label="Ориентация вида" className={cell}>
            <Box size={24}>
              <path d="M1 9l8-8h14v14l-8 8M9 1v8M23 1l-8 8" fill="none" stroke="#555" strokeDasharray="2 1" />
              <path d="M1 9h14v14H1z" fill="#8fc3f2" stroke="#2c639c" />
              <path d="M13 0v6M10 4h6l-3 4zM23 13h-5M20 10v6l-4-3z" fill="#c8222a" stroke="#c8222a" />
            </Box>
          </button>
          <button aria-label="Варианты ориентации" className="flex w-[16px] shrink-0 items-center justify-center"><Caret /></button>
          <button aria-label="Закрасить с кромками" className="flex w-[32px] shrink-0 items-center justify-center border border-[#55565a] bg-[#9c9da1]">
            <Box size={24}><Cube front="#4f9ef0" top="#8cc4fa" side="#1f5fc4" line="#0c1c3c" /></Box>
          </button>
          <button aria-label="Закрасить" className={cell}>
            <Box size={24}><Cube front="#9ccaf7" top="#b9dafa" side="#7a92ea" line="#a6c8f4" /></Box>
          </button>
          <button aria-label="Каркасное представление" className={cell}>
            <Box size={24}><Cube front="none" top="none" side="none" line="#555" /><path d="M8 1v15h15M8 16l-7 7" fill="none" stroke="#555" /></Box>
          </button>
          <button aria-label="Скрытые линии отображаются" className={cell}>
            <Box size={24}><Cube front="none" top="none" side="none" line="#555" dashed /></Box>
          </button>
          <button aria-label="Скрыть невидимые линии" className={cell}>
            <Box size={24}><Cube front="#fff" top="#fff" side="#fff" line="#555" /></Box>
          </button>
          <button aria-label="Скрыть или показать элементы" className="flex w-[36px] shrink-0 items-center justify-center">
            <Box size={24}><circle cx="12" cy="12" r="8" fill="#ddd" stroke="#777" /></Box>
          </button>
        </div>
      </nav>
    </main>
  );
}

const navPaths = ["M1 1v8M8 1v8L3 5z", "M8 1v8L3 5z", "M2 1v8l5-4z", "M2 1v8l5-4zM9 1v8"];

export default function App() {
  return (
    <div className="relative flex h-screen flex-col overflow-hidden bg-[#d8dbe0] font-['Roboto','Open_Sans',sans-serif] text-[12px] leading-[18px] text-black">
      <TitleBar />
      <CurveBar />
      <div role="tablist" className="flex h-[21px] shrink-0 items-start overflow-hidden">
        {tabs.map(([label, width]) =>
          label === "Кривые" ? (
            <button key={label} role="tab" aria-selected="true" className={`${width} h-[21px] shrink-0 border-b-2 border-black bg-[#e3e6ea] pb-px font-bold leading-[17px]`}>{label}</button>
          ) : (
            <button key={label} role="tab" aria-selected="false" className={`${width} h-[20px] shrink-0 overflow-hidden whitespace-nowrap border-b border-r border-t border-black bg-[#a5a7ac] pb-px leading-[15px] text-[#222] last:pl-[7px] last:text-left`}>{label}</button>
          ),
        )}
      </div>
      <div className="flex min-h-0 flex-1">
        <FeatureManager />
        <Viewport />
      </div>
      <div role="tablist" aria-label="Листы" className="flex h-[15px] shrink-0 border-b border-t border-black bg-[#e3e5e9]">
        <div className="flex w-[68px] gap-px bg-[#b3b6ba] pl-[2px]">
          {navPaths.map((d, i) => (
            <button key={d} aria-label={["Первый лист", "Предыдущий лист", "Следующий лист", "Последний лист"][i]} className="flex w-[15px] items-center justify-center border border-[#8f9296] bg-[#a5a7ab]">
              <svg width="10" height="10" viewBox="0 0 10 10" aria-hidden="true"><path d={d} fill="#85878b" stroke="#85878b" /></svg>
            </button>
          ))}
        </div>
        <button role="tab" aria-selected="true" className="w-[68px] border-x border-black bg-[#e3e6ea] font-bold leading-[13px]">Модель</button>
        <button role="tab" aria-selected="false" className="w-[177px] whitespace-nowrap border-r-2 border-black bg-[#a8aaae] pr-1 leading-[13px]">Исследование движения 1</button>
      </div>
      <footer className="h-[20px] shrink-0 border-t border-[#f3f4f5] bg-[#d8dbe0] pl-[2px] leading-[19px]">S_8</footer>
      <div className="h-[3px] shrink-0 overflow-hidden bg-linear-to-b from-[#36424e] to-[#6b7d8c]">
        <div className="ml-[18px] h-[8px] w-[20px] rounded-full bg-[#8cc4e4]" />
      </div>
      <svg className="pointer-events-none absolute inset-0 z-20 size-full" fill="none" stroke="#ff0000" strokeWidth="6" strokeLinecap="round" strokeLinejoin="round" aria-hidden="true">
        <path d="M7 2H46V79L4 80L1 6" />
        <path d="M49 79L66 95L83 113L103 138L133 168L163 198L183 216L225 259L259 284L290 309L322 333L376 378L398 400L455 445L517 501L555 539L592 575L606 595L622 609L638 633L650 649L662 667L664 661V905" />
        <path d="M668 651H907V905M661 906H912" />
      </svg>
    </div>
  );
}
